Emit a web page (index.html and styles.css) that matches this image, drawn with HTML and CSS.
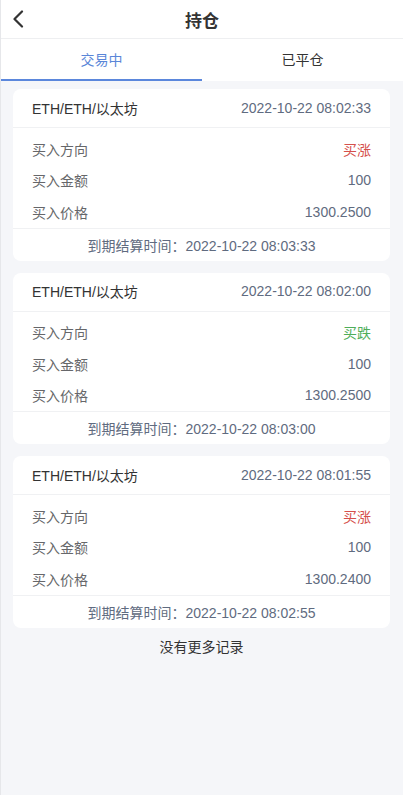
FILE: index.html
```html
<!DOCTYPE html>
<html lang="zh">
<head>
<meta charset="utf-8">
<meta name="viewport" content="width=device-width, initial-scale=1">
<title>持仓</title>
<link rel="stylesheet" href="styles.css">
</head>
<body>
<div class="page">
  <header class="nav">
    <span class="back">
      <svg width="14" height="18" viewBox="0 0 14 18"><path d="M11 1.5 L3.5 9 L11 16.5" fill="none" stroke="#333" stroke-width="2.2" stroke-linecap="round" stroke-linejoin="round"/></svg>
    </span>
    <h1 class="title">持仓</h1>
  </header>
  <nav class="tabs">
    <div class="tab active">交易中</div>
    <div class="tab">已平仓</div>
  </nav>
  <main class="list">
    <section class="card">
      <div class="card-head"><span class="sym">ETH/ETH/以太坊</span><span class="time">2022-10-22 08:02:33</span></div>
      <div class="card-body">
        <div class="row"><span class="lbl">买入方向</span><span class="val up">买涨</span></div>
        <div class="row"><span class="lbl">买入金额</span><span class="val">100</span></div>
        <div class="row"><span class="lbl">买入价格</span><span class="val">1300.2500</span></div>
      </div>
      <div class="card-foot">到期结算时间：2022-10-22 08:03:33</div>
    </section>
    <section class="card">
      <div class="card-head"><span class="sym">ETH/ETH/以太坊</span><span class="time">2022-10-22 08:02:00</span></div>
      <div class="card-body">
        <div class="row"><span class="lbl">买入方向</span><span class="val down">买跌</span></div>
        <div class="row"><span class="lbl">买入金额</span><span class="val">100</span></div>
        <div class="row"><span class="lbl">买入价格</span><span class="val">1300.2500</span></div>
      </div>
      <div class="card-foot">到期结算时间：2022-10-22 08:03:00</div>
    </section>
    <section class="card">
      <div class="card-head"><span class="sym">ETH/ETH/以太坊</span><span class="time">2022-10-22 08:01:55</span></div>
      <div class="card-body">
        <div class="row"><span class="lbl">买入方向</span><span class="val up">买涨</span></div>
        <div class="row"><span class="lbl">买入金额</span><span class="val">100</span></div>
        <div class="row"><span class="lbl">买入价格</span><span class="val">1300.2400</span></div>
      </div>
      <div class="card-foot">到期结算时间：2022-10-22 08:02:55</div>
    </section>
    <p class="nomore">没有更多记录</p>
  </main>
</div>
</body>
</html>
```

FILE: styles.css
```css
* { box-sizing: border-box; }
html, body {
  margin: 0;
  padding: 0;
  background: #f5f6f9;
}
body {
  font-family: "Liberation Sans", "Noto Sans CJK SC", sans-serif;
  font-size: 14px;
  color: #333;
}
.page {
  min-height: 795px;
  background: #f5f6f9;
  border-left: 1px solid #e6e7ea;
}
.nav {
  height: 39px;
  background: #fff;
  border-bottom: 1px solid #eeeff1;
  display: flex;
  align-items: center;
  justify-content: center;
  position: relative;
}
.back {
  position: absolute;
  left: 10px;
  top: 10px;
  display: flex;
}
.title {
  margin: 0;
  font-size: 17px;
  font-weight: bold;
  color: #333;
}
.tabs {
  display: flex;
  background: #fff;
  height: 42px;
}
.tab {
  flex: 1;
  display: flex;
  align-items: center;
  justify-content: center;
  color: #333;
  font-size: 14px;
  border-bottom: 2px solid transparent;
}
.tab.active {
  color: #5a86d8;
  border-bottom-color: #5b87dc;
}
.list {
  padding: 8px 13px 0 12px;
  display: flex;
  flex-direction: column;
  gap: 12px;
}
.card {
  background: #fff;
  border-radius: 8px;
}
.card-head {
  height: 39px;
  display: flex;
  align-items: center;
  justify-content: space-between;
  padding: 0 19px 1px;
  border-bottom: 1px solid #f0f1f3;
}
.sym { color: #333; }
.time { color: #5f6b80; }
.card-body {
  padding-top: 5px;
  border-bottom: 1px solid #f0f1f3;
}
.row {
  height: 31.5px;
  display: flex;
  align-items: center;
  justify-content: space-between;
  padding: 0 19px;
}
.lbl { color: #66676a; }
.val { color: #5f6b80; }
.val.up { color: #d5504c; }
.val.down { color: #4fae5a; }
.card-foot {
  height: 32px;
  display: flex;
  align-items: center;
  justify-content: center;
  color: #5f6b80;
}
.nomore {
  margin: -4px 0 0;
  text-align: center;
  color: #333;
  font-size: 14px;
}
```
